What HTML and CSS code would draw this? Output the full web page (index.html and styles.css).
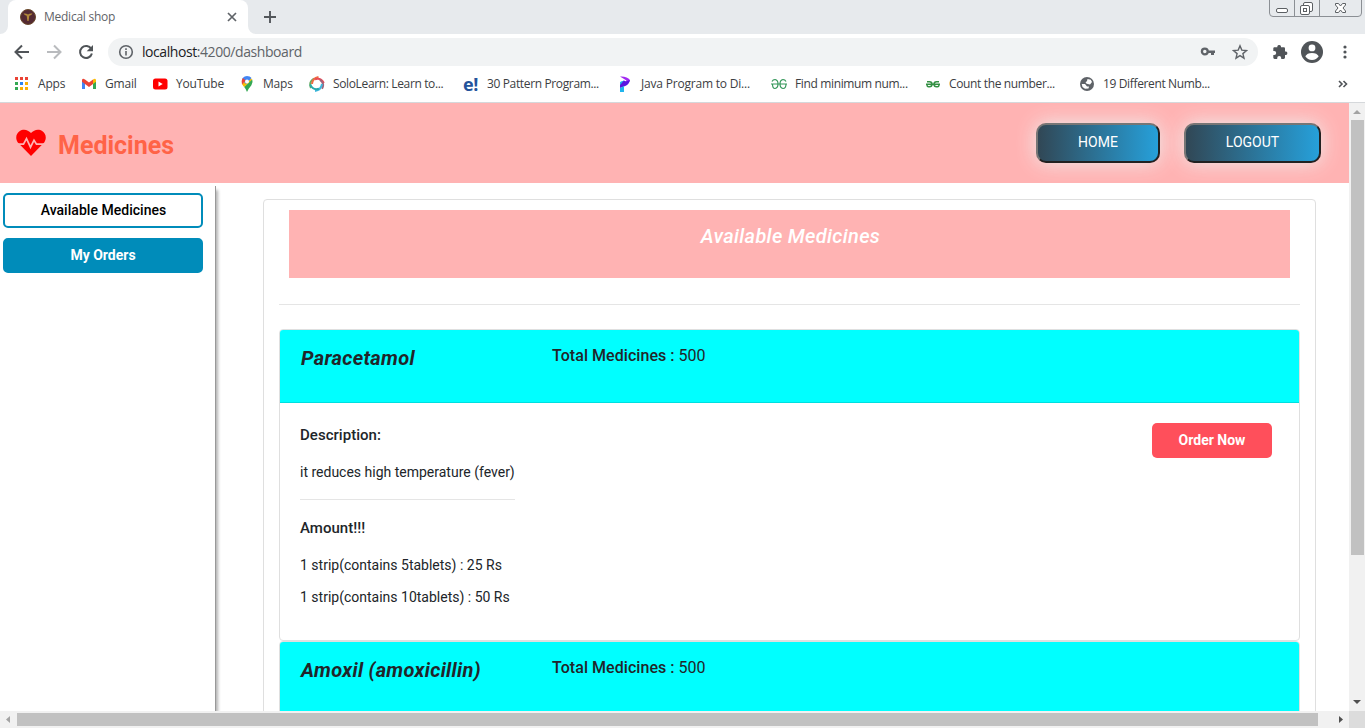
FILE: index.html
```html
<!DOCTYPE html>
<html lang="en">
<head>
<meta charset="utf-8">
<title>Medical shop</title>
<link rel="stylesheet" href="styles.css">
</head>
<body>
<div class="browser">
  <div class="tabstrip">
    <svg class="tab-curve" width="8" height="34"><path d="M8 34H0a8 8 0 0 0 8-8z" fill="#fff"/></svg>
    <div class="tab">
      <svg width="16" height="16" viewBox="0 0 16 16"><circle cx="8" cy="8" r="7.500" fill="#542a32" stroke="#6b4a2c"/><path d="M3.500 4.500q2.500-.5 4.500 1 2-1.500 4.500-1-1 2-3.200 2.200L8.600 12H7.400L6.700 6.700Q4.500 6.500 3.500 4.500z" fill="#b38a3a"/></svg>
      <span class="tab-title">Medical shop</span>
      <svg width="10" height="10" viewBox="0 0 10 10" stroke="#5f6368" stroke-width="1.700"><path d="M1 1l8 8M9 1L1 9"/></svg>
    </div>
    <svg class="tab-curve" width="8" height="34"><path d="M0 34h8a8 8 0 0 1-8-8z" fill="#fff"/></svg>
    <svg class="newtab" width="14" height="14" viewBox="0 0 14 14" stroke="#53575b" stroke-width="1.900"><path d="M7 1v12M1 7h12"/></svg>
    <svg class="winctl" width="94" height="18" viewBox="0 0 94 18" fill="none" stroke="#8b8f94"><path d="M.5 0v13q0 3.500 3.500 3.500h85q3.500 0 3.500-3.500V0M25.500 0v16M50.500 0v16"/><g stroke="#5b5f63"><rect x="7.500" y="8.500" width="11" height="4" rx="1.500" fill="#fff"/><path d="M34.500 5.500V4q0-1.500 1.500-1.500h6q1.500 0 1.500 1.500v6q0 1.500-1.500 1.500h-1.500" fill="#fff"/><rect x="31.500" y="5.500" width="9" height="9" rx="1.500" fill="#fff"/><rect x="34.500" y="8.500" width="3" height="3"/><path d="M66.500 3.500h3l2 2.500 2-2.500h3v1.500L74 8l2.500 3v1.500h-3l-2-2.500-2 2.500h-3V11L69 8l-2.500-3z" fill="#fff"/></g></svg>
  </div>

  <div class="toolbar">
    <svg class="nav-icon" width="16" height="16" viewBox="0 0 16 16" fill="none" stroke="#505458" stroke-width="2"><path d="M15 8H2M8 1.500L1.500 8 8 14.500"/></svg>
    <svg class="nav-icon" width="16" height="16" viewBox="0 0 16 16" fill="none" stroke="#b9bbbe" stroke-width="2"><path d="M1 8h13M8 1.500L14.500 8 8 14.500"/></svg>
    <svg class="nav-icon" width="16" height="16" viewBox="0 0 16 16"><path d="M13.300 5A6 6 0 1 0 13.900 9.500" fill="none" stroke="#505458" stroke-width="2"/><path d="M15 1v6.300H8.700z" fill="#505458"/></svg>
    <div class="omnibox">
      <svg width="16" height="16" viewBox="0 0 16 16" fill="none" stroke="#5f6368" stroke-width="1.600"><circle cx="8" cy="8" r="6.300"/><path d="M8 7v4.500M8 4.300v1.600"/></svg>
      <span class="url"><b>localhost</b>:4200/dashboard</span>
      <svg class="key" width="16" height="16" viewBox="0 0 16 16"><circle cx="4.800" cy="7.500" r="2.900" fill="none" stroke="#5f6368" stroke-width="2.300"/><path d="M8 6.500h7v2.500h-1v2h-3V9H8z" fill="#5f6368"/></svg>
      <svg width="16" height="16" viewBox="0 0 16 16"><path d="M8 1.800l1.800 4.300 4.700.4-3.600 3.100 1.100 4.600L8 11.700l-4 2.500 1.100-4.600-3.600-3.100 4.700-.4z" fill="none" stroke="#5f6368" stroke-width="1.400"/></svg>
    </div>
    <svg class="ext" width="16" height="16" viewBox="0 0 16 16"><path d="M14 7.500h-1V4.600c0-.8-.6-1.300-1.300-1.300H9V2.500a1.900 1.900 0 0 0-3.700 0v.8H2.600c-.7 0-1.300.5-1.300 1.300V7h.9a2 2 0 0 1 0 4h-.9v2.600c0 .8.600 1.400 1.300 1.400h2.600v-.9a2 2 0 0 1 4 0v.9h2.500c.7 0 1.300-.6 1.300-1.400V11h1a1.800 1.800 0 0 0 0-3.500z" fill="#505458"/></svg>
    <svg class="avatar" width="22" height="22" viewBox="0 0 22 22"><circle cx="11" cy="11" r="11" fill="#505458"/><circle cx="11" cy="6.900" r="3.400" fill="#fff"/><path d="M4.300 15.300Q6 11.900 11 11.900t6.700 3.400Q15.500 18.900 11 18.900t-6.700-3.600z" fill="#fff"/></svg>
    <svg class="menu-dots" width="4" height="16" viewBox="0 0 4 16" fill="#505458"><circle cx="2" cy="3" r="1.600"/><circle cx="2" cy="8" r="1.600"/><circle cx="2" cy="13" r="1.600"/></svg>
  </div>

  <div class="bookmarks">
    <div class="bm short"><svg width="16" height="16" viewBox="0 0 16 16"><path d="M1 1h3v3H1zM6 1h3v3H6zM11 1h3v3h-3z" fill="#ea4335"/><path d="M1 6h3v3H1zM1 11h3v3H1z" fill="#34a853"/><path d="M6 6h3v3H6z" fill="#2b84f3"/><path d="M11 6h3v3h-3zM6 11h3v3H6zM11 11h3v3h-3z" fill="#fbb004"/></svg><span>Apps</span></div>
    <div class="bm short"><svg width="16" height="16" viewBox="0 0 16 16"><path d="M1 4v9h3V7z" fill="#4285f4"/><path d="M12 7v6h3V4z" fill="#34a853"/><path d="M12 3.500V8l3-2.300V4q-.5-2-3-.5z" fill="#fbbc04"/><path d="M1 4q.5-2 3-.5l4 3 4-3V8l-4 3-4-3-3-2.300z" fill="#ea4335"/></svg><span>Gmail</span></div>
    <div class="bm short"><svg width="16" height="16" viewBox="0 0 16 16"><rect x="1" y="2.500" width="14.500" height="11" rx="2.500" fill="#f00"/><path d="M6.500 5.500v5l4.200-2.500z" fill="#fff"/></svg><span>YouTube</span></div>
    <div class="bm short"><svg width="16" height="16" viewBox="0 0 16 16"><path d="M3 8q1 2 2.200 3L13.300 4 11 1z" fill="#fbbc04"/><path d="M13.200 3.500q1.200 3-.8 5.700Q9.500 12.500 8 16q-1-3-2.800-5z" fill="#34a853"/><path d="M3.700 2Q5.500 0 8 0q3 0 4.500 2L7 8 3 4z" fill="#4285f4"/><path d="M3.800 1.900l3 2.600L3 8.500Q1.700 5 3.800 1.900z" fill="#ea4335"/><circle cx="8" cy="5.400" r="2" fill="#fff"/></svg><span>Maps</span></div>
    <div class="bm"><svg width="16" height="16" viewBox="0 0 16 16" fill="none" stroke-width="2"><path d="M2 12Q-.5 6 5 2.500" stroke="#65aa62"/><path d="M3 8Q3.500 2 9.500 1" stroke="#ee6c42"/><path d="M6 3.200q6-1.800 8.800 3.800" stroke="#e94d58"/><path d="M11 3.700q5 4 2 9" stroke="#a0647c"/><path d="M13 8q-1 6-7 6.900" stroke="#3fb7de"/><path d="M10 12.700q-6 2-8.800-4" stroke="#26a9ac"/></svg><span>SoloLearn: Learn to...</span></div>
    <div class="bm"><b class="mark-e">e!</b><span>30 Pattern Program...</span></div>
    <div class="bm java"><svg width="16" height="16" viewBox="0 0 16 16"><path d="M3 .5q7-.5 10 3.500-1 4-6 5.500L7 6.500Q9 5.500 9.500 4.500 7 3 3 .5z" fill="#a32af2"/><path d="M3 6.500l4-2 2 1 4-1.500q-1 5-6 6.500L3 12z" fill="#5a14e0"/><path d="M3 6l4-1.500L3 9zM3 12l4-2v6H3z" fill="#20b5ed"/></svg><span>Java Program to Di...</span></div>
    <div class="bm"><svg width="16" height="16" viewBox="0 0 16 16" fill="none" stroke="#35975a" stroke-width="1.200"><path d="M0 8h16M1 5.500Q2 3.500 4 3.500 7 4 7 8t-3 4.500Q1.500 12.500 1.500 8M15 5.500Q14 3.500 12 3.500 9 4 9 8t3 4.500q3 0 3-4.500"/></svg><span>Find minimum num...</span></div>
    <div class="bm"><svg width="16" height="16" viewBox="0 0 16 16" fill="none" stroke="#349044" stroke-width="1.500"><path d="M1 8.300h14M2 5.800h2.500Q7 5.800 7 8.300t-2.500 2.500h-1Q2 10.800 2 8.500M14 5.800h-2.500Q9 5.800 9 8.300t2.500 2.500h1q1.500 0 1.500-2.300"/></svg><span>Count the number...</span></div>
    <div class="bm"><svg width="16" height="16" viewBox="0 0 16 16"><circle cx="8" cy="8" r="7" fill="#5f6368"/><path d="M8.500 3L11.800 3.700 13 6 11 8.500 7.700 7.700 6.500 6.500 8 5zM2.700 8H6l2 2.500H10L9.500 12.500 6 12.700 3.500 11z" fill="#fff"/></svg><span>19 Different Numb...</span></div>
    <svg class="more" width="10" height="8" viewBox="0 0 10 8" fill="none" stroke="#505458" stroke-width="1.600"><path d="M1 1l3 3-3 3M5.500 1l3 3-3 3"/></svg>
  </div>

  <div class="viewport">
    <div class="page">
      <header class="site-header">
        <svg class="heart" width="30" height="28" viewBox="0 0 30 28"><path d="M15 27L1.800 13.500C-1 9 .2 4.500 3.500 2.200 7.500-.6 12 .7 15 4c3-3.300 7.500-4.600 11.500-1.800C29.800 4.500 31 9 28.200 13.500z" fill="red"/><path d="M2 15.200h5.500l3-5.500 4 8.500 3.500-7 2.500 4H28" fill="none" stroke="#ffb3b3" stroke-width="1.700"/></svg>
        <h1>Medicines</h1>
        <button class="pill home">HOME</button>
        <button class="pill logout">LOGOUT</button>
      </header>
      <div class="columns">
        <aside class="sidebar">
          <button class="side-btn active">Available Medicines</button>
          <button class="side-btn">My Orders</button>
        </aside>
        <main class="content">
          <section class="panel">
            <h2 class="banner">Available Medicines</h2>
            <hr class="rule">
            <article class="card">
              <div class="card-header"><h3>Paracetamol</h3><p><b>Total Medicines :</b> 500</p></div>
              <div class="card-body">
                <div class="details">
                  <h4>Description:</h4>
                  <p class="desc">it reduces high temperature (fever)</p>
                  <h4>Amount!!!</h4>
                  <p class="price">1 strip(contains 5tablets) : 25 Rs</p>
                  <p class="price">1 strip(contains 10tablets) : 50 Rs</p>
                </div>
                <button class="order">Order Now</button>
              </div>
            </article>
            <article class="card">
              <div class="card-header"><h3>Amoxil (amoxicillin)</h3><p><b>Total Medicines :</b> 500</p></div>
              <div class="card-body"></div>
            </article>
          </section>
        </main>
      </div>
    </div>
    <div class="vbar">
      <svg width="16" height="17"><path d="M4 11h8L8 7z" fill="#a3a3a3"/></svg>
      <div class="vthumb"></div>
      <svg width="16" height="17"><path d="M4 6h8l-4 4z" fill="#505050"/></svg>
    </div>
    <div class="hbar">
      <svg width="17" height="17"><path d="M10 5v7L6 8.500z" fill="#a3a3a3"/></svg>
      <div class="hthumb"></div>
      <svg width="17" height="17"><path d="M7 5v7l4-3.500z" fill="#505050"/></svg>
    </div>
    <div class="corner"></div>
  </div>
</div>
</body>
</html>
```
FILE: styles.css
```css
* { box-sizing: border-box; }
body { margin: 0; overflow: hidden; background: #fff; font-family: Roboto, sans-serif; color: #212529; }
h1, h2, h3, h4, p { margin: 0; }
button { font-family: inherit; padding: 0; white-space: nowrap; }
svg { display: block; flex: none; }

.browser { width: 1365px; height: 728px; display: flex; flex-direction: column; overflow: hidden; }
.tabstrip { height: 34px; flex: none; background: #e7eaed; display: flex; align-items: flex-start; }
.tab { width: 240px; height: 34px; background: #fff; border-radius: 8px 8px 0 0; display: flex; align-items: center; padding: 0 11px 0 12px; }
.tab-title { flex: 1; margin-left: 8px; padding-bottom: 2px; font: 12px "Open Sans", sans-serif; letter-spacing: -0.25px; color: #5f6368; }
.newtab { margin: 10px 0 0 7px; }
.winctl { margin-left: auto; margin-right: 2px; }

.toolbar { height: 36px; flex: none; display: flex; align-items: center; padding-left: 14px; }
.nav-icon { margin-right: 16px; }
.omnibox { width: 1150px; height: 28px; margin-left: -2px; border-radius: 14px; background: #f1f3f4; display: flex; align-items: center; padding: 0 10px; }
.url { margin-left: 8px; padding-bottom: 2px; flex: 1; font: 14px "Open Sans", sans-serif; letter-spacing: -0.43px; color: #5f6368; }
.url b { font-weight: 400; color: #202124; }
.key { margin-right: 16px; }
.ext { margin-left: 14px; }
.avatar { margin-left: 13px; }
.menu-dots { margin-left: 20px; }

.bookmarks { height: 33px; flex: none; border-bottom: 1px solid #d5d8db; display: grid; grid-template-columns: 67px 71px 87px 70px 154px 154px 154px 154px 154px 259px 10px; align-items: center; padding: 0 0 4px 14px; }
.bm { display: flex; align-items: center; gap: 8px; font: 12px "Open Sans", sans-serif; letter-spacing: -0.36px; color: #3c4043; white-space: nowrap; }
.bm span { padding-bottom: 2px; }
.bm.short, .bm.java { letter-spacing: -0.2px; }
.mark-e { width: 16px; font: bold 18px/16px "Open Sans", sans-serif; letter-spacing: -0.5px; color: #23539b; }

.viewport { flex: 1; display: grid; grid-template-columns: 1349px 16px; grid-template-rows: 608px 17px; }
.page { overflow: hidden; display: flex; flex-direction: column; }
.site-header { height: 80px; flex: none; background: #ffb3b3; display: flex; align-items: flex-start; padding: 20px 28px 0 16px; }
.heart { margin-top: 6px; }
.site-header h1 { margin: 8px auto 0 12px; font-size: 25px; line-height: 30px; font-weight: 700; color: tomato; }
.pill { height: 40px; border: 2px solid; border-color: #767676 #212121 #212121 #767676; border-radius: 10px; background: linear-gradient(to right, #314755 0%, #26a0da 100%); box-shadow: 0 0 20px #eee; color: #fff; font-size: 14px; line-height: 35px; padding-bottom: 1px; }
.home { width: 124px; }
.logout { width: 137px; margin-left: 24px; }

.columns { flex: 1; min-height: 0; display: flex; }
.sidebar { width: 216px; margin-top: 3px; border-right: 1px solid #999; box-shadow: 3px 3px 3px -1px rgba(0,0,0,.3); padding: 7px 0 0 3px; display: flex; flex-direction: column; gap: 10px; }
.side-btn { width: 200px; height: 35px; border: 2px solid #008cba; border-radius: 5px; background: #008cba; color: #fff; font-size: 14px; font-weight: 700; padding-bottom: 2px; }
.side-btn.active { background: #fff; color: #000; font-weight: 500; letter-spacing: 0.03px; padding-left: 1px; }
.content { padding: 16px 33px 0 47px; flex: 1; min-width: 0; }
.panel { height: 900px; border: 1px solid #dfdfdf; border-radius: 4px; padding: 10px 15px; }
.banner { height: 68px; margin: 0 10px; background: #ffb3b3; color: #fff; font-size: 20px; line-height: 24px; font-weight: 500; font-style: italic; letter-spacing: 0.32px; text-align: center; padding: 14px 0 0 2px; }
.rule { height: 1px; border: 0; background: #e5e5e5; margin: 26px 0 24px; }
.card { height: 312px; border: 1px solid #dfdfdf; border-radius: 4px; overflow: hidden; background: #fff; }
.card-header { height: 73px; background: cyan; border-bottom: 1px solid #00dfdf; padding: 0 20px; display: grid; grid-template-columns: 252px 1fr; }
.card-header h3 { font-size: 20px; line-height: 24px; font-weight: 700; font-style: italic; letter-spacing: 0.32px; margin: 16px 0 0 1px; }
.card-header p { font-size: 16px; line-height: 24px; margin-top: 14px; }
.card-header b { font-weight: 500; letter-spacing: 0.05px; }
.card-body { display: flex; justify-content: space-between; align-items: flex-start; padding: 20px 27px 0 20px; }
.details h4 { font-size: 15px; line-height: 24px; font-weight: 500; letter-spacing: 0.03px; }
.desc { font-size: 14px; line-height: 24px; margin-top: 13px; padding-bottom: 15px; border-bottom: 1px solid #e5e5e5; margin-bottom: 16px; }
.price { font-size: 14px; line-height: 24px; margin-top: 13px; }
.price + .price { margin-top: 8px; }
.order { width: 120px; height: 35px; border: 0; border-radius: 5px; background: #ff4f5b; color: #fff; font-size: 14px; font-weight: 700; padding-bottom: 2px; }

.vbar, .hbar { background: #f1f1f1; display: flex; }
.vbar { flex-direction: column; justify-content: space-between; }
.vthumb { width: 13px; height: 435px; margin: 0 1px 139px 2px; background: #c1c1c1; }
.hbar { justify-content: space-between; }
.hthumb { width: 1301px; height: 13px; margin: 2px 14px 0 0; background: #c1c1c1; }
.corner { background: #dcdcdc; }
```
